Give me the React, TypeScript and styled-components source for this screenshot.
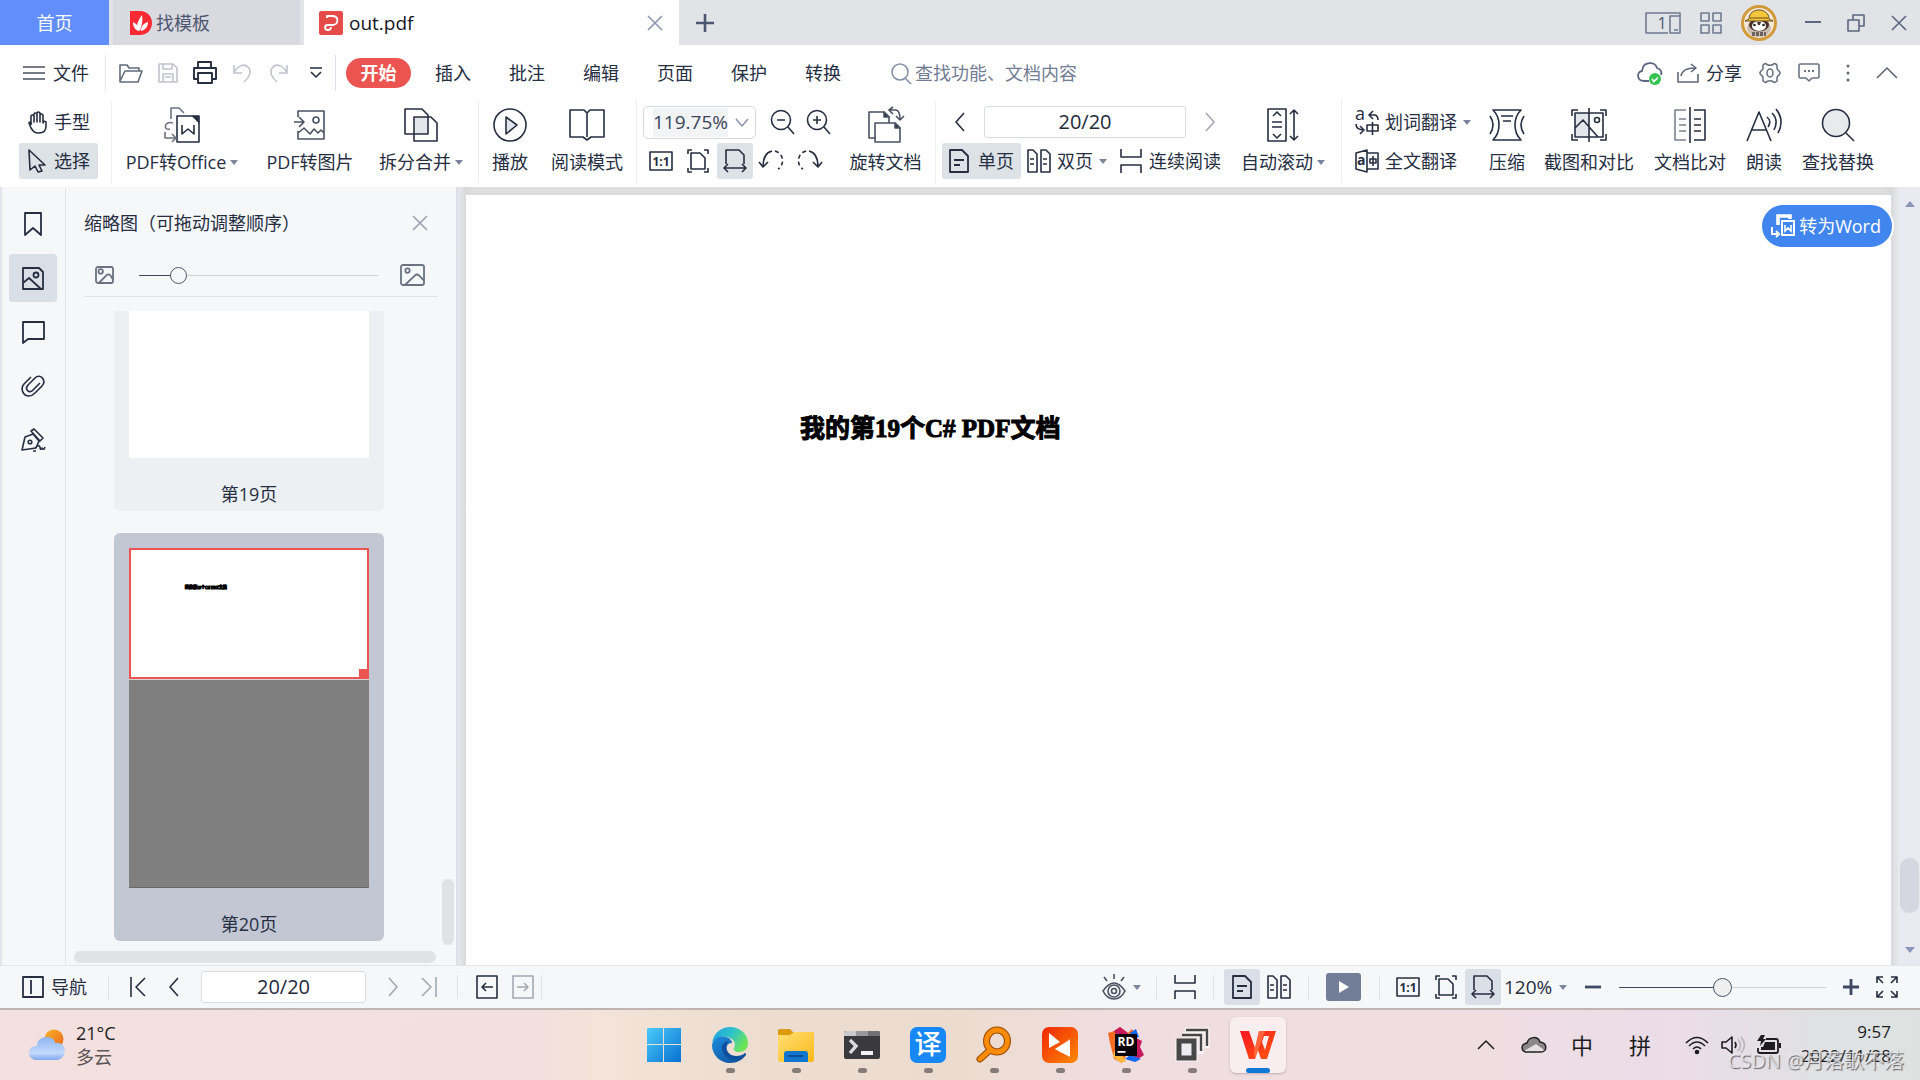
import React, { useState } from 'react';
import styled, { createGlobalStyle, css } from 'styled-components';

const ink = '#262e42';
const soft = '#6f7a92';
const hover = '#dde2e6';
const line = '#e3e5ea';

const GlobalStyle = createGlobalStyle`
  * { box-sizing: border-box; }
  html, body { margin: 0; padding: 0; }
  body, button, input, select {
    font-family: "Open Sans", "Noto Sans CJK SC", sans-serif;
    font-size: 18px;
    line-height: 24px;
    color: ${ink};
  }
  button { border: 0; padding: 0; background: none; white-space: nowrap; cursor: pointer; }
  svg { display: block; flex: none; overflow: visible; }
`;

/* ---------- icon helper ---------- */

type IcoProps = { w: number; h: number; c?: string; s?: number; children: React.ReactNode };
const Ico = ({ w, h, c = ink, s = 1.6, children }: IcoProps) => (
  <svg width={w} height={h} viewBox={`0 0 ${w} ${h}`} fill="none" stroke={c} strokeWidth={s} strokeLinejoin="round" aria-hidden="true">
    {children}
  </svg>
);

const Caret = () => (
  <svg width="8" height="5" viewBox="0 0 8 5" aria-hidden="true"><path d="M0 0h8L4 5z" fill="#7b849c" /></svg>
);
const Chevron = ({ dir, c }: { dir: 'left' | 'right' | 'up' | 'down'; c?: string }) => {
  const d = { left: 'M10 2 2 11l8 9', right: 'M2 2l8 9-8 9', up: 'M1 11 11 1l10 10', down: 'M1 1l6 7 6-7' }[dir];
  const size = { left: [12, 22], right: [12, 22], up: [22, 12], down: [14, 9] }[dir];
  return <Ico w={size[0]} h={size[1]} c={c}><path d={d} /></Ico>;
};
const CloseIcon = ({ c = '#5b6681', size = 16 }: { c?: string; size?: number }) => (
  <Ico w={size} h={size} c={c} s={1.6}><path d={`M1 1 ${size - 1} ${size - 1}M${size - 1} 1 1 ${size - 1}`} /></Ico>
);
const OneToOne = () => (
  <Ico w={24} h={20}><rect x="1" y="1" width="22" height="18" />
    <text x="12" y="15" fontSize="12" fontWeight="700" textAnchor="middle" fill={ink} stroke="none">1:1</text></Ico>
);
const FitPage = () => (
  <Ico w={22} h={24}><path d="M1 5V1h4M17 1h4v4M1 19v4h4M17 23h4v-4M4 4h9l5 5v11H4z" /></Ico>
);
const FitWidth = () => (
  <Ico w={24} h={24}><path d="M3 15V1h13l5 5v9M1 19h22M5 15l-4 4 4 4M19 15l4 4-4 4" /></Ico>
);
const SinglePage = () => (
  <Ico w={20} h={24} s={1.8}><path d="M1 1h12l6 6v16H1zM5 11h10M5 16h6" /></Ico>
);
const DoublePage = () => (
  <Ico w={24} h={24}><path d="M1 1h5l4 4v18H1zM14 1h5l4 4v18h-9zM3 10h4M3 15h4M16 10h4M16 15h4" /></Ico>
);
const Continuous = () => (
  <Ico w={22} h={24}><path d="M1 0v8h20V0M1 24v-8h20v8" /></Ico>
);
const Landscape = ({ w, h }: { w: number; h: number }) => (
  <Ico w={w} h={h} c="#6b7383" s={1.8}><rect x="1" y="1" width={w - 2} height={h - 2} rx="2" /><circle cx={w * 0.3} cy={h * 0.3} r="2.2" />
    <path d={`M${w * 0.2} ${h - 1} ${w * 0.6} ${h * 0.52}q2-2 4 0L${w - 1} ${h * 0.75}`} /></Ico>
);

/* ---------- shared controls ---------- */

const Cell = styled.button<{ $w?: number; $on?: string }>`
  display: flex; align-items: center; justify-content: center; flex: none;
  width: ${p => p.$w ?? 36}px; height: 36px; border-radius: 3px;
  background: ${p => p.$on ?? 'transparent'};
`;
const Rule = styled.i<{ $h: number; $l: number; $r: number }>`
  flex: none; width: 1px; height: ${p => p.$h}px; background: #dfe2e6;
  margin: 0 ${p => p.$r}px 0 ${p => p.$l}px;
`;
const PageInput = styled.input<{ $w: number; $m: number }>`
  width: ${p => p.$w}px; height: 32px; margin: 0 ${p => p.$m}px; border: 1px solid #d9dce0; border-radius: 3px; background: #fff;
  font-size: 20px; text-align: center; padding: 0 0 2px; color: #222a3c;
`;

/* ---------- title bar ---------- */

const Page = styled.div`display: flex; flex-direction: column; height: 100vh; min-height: 720px; overflow: hidden; background: #fff;`;
const TitleBar = styled.header`display: flex; height: 45px; flex: none; background: #e2e3e7;`;
const HomeTab = styled.button`width: 109px; background: #618efa; color: #fff;`;
const DocTab = styled.div<{ $active?: boolean }>`
  display: flex; align-items: center; gap: 4px;
  ${p => p.$active
    ? css`width: 375px; margin-left: 4px; padding: 0 16px 0 15px; background: #fff; gap: 6px; button { color: #14181f; }`
    : css`width: 187px; margin-left: 4px; padding-left: 16px; background: #d9dadf; button { color: #4c5670; }`}
`;
const TabName = styled.button<{ $latin?: boolean }>`flex: 1; text-align: left; height: 45px; font-size: ${p => (p.$latin ? 19 : 18)}px;`;
const NewTab = styled.button`display: flex; align-items: center; padding: 0 17px;`;
const WindowTools = styled.div`display: flex; align-items: center; margin-left: auto;`;

/* ---------- menu row ---------- */

const MenuRow = styled.nav`display: flex; align-items: center; height: 56px; flex: none; padding: 0 14px 0 23px;`;
const FileButton = styled.button`display: flex; align-items: center; gap: 8px;`;
const Pill = styled.button`width: 65px; height: 30px; border-radius: 15px; background: #eb5450; color: #fff; font-weight: 700; margin: 0 5px 0 10px;`;
const MenuTab = styled.button`width: 74px; height: 36px;`;
const Search = styled.label`
  display: flex; align-items: center; gap: 3px; margin-left: 31px;
  input { width: 180px; border: 0; padding: 0; outline: 0; background: none; }
  input::placeholder { color: #717c94; opacity: 1; }
`;
const MenuRight = styled.div`display: flex; align-items: center; margin-left: auto;`;
const Share = styled.button`display: flex; align-items: center; gap: 7px; margin: 0 8px 0 14px;`;

/* ---------- ribbon ---------- */

const Ribbon = styled.div`display: flex; height: 86px; flex: none;`;
const Group = styled.div<{ $l?: number; $r?: number; $last?: boolean }>`
  display: flex; height: 82px; flex: none; padding: 0 ${p => p.$r ?? 0}px 0 ${p => p.$l ?? 0}px;
  border-right: ${p => (p.$last ? '0' : '1px solid #eceef0')};
`;
const Stack = styled.div`display: flex; flex-direction: column; gap: 3px; padding-top: 3px;`;
const Row = styled.div<{ $gap?: number }>`display: flex; align-items: center; height: 36px; gap: ${p => p.$gap ?? 0}px;`;
const Small = styled.button<{ $gap: number; $pad: number; $on?: boolean }>`
  display: flex; align-items: center; height: 36px; border-radius: 3px;
  gap: ${p => p.$gap}px; padding: 0 ${p => p.$pad}px; background: ${p => (p.$on ? hover : 'transparent')};
`;
const BigButton = styled.button<{ $w: number }>`
  display: flex; flex-direction: column; align-items: center; gap: 7px; padding-top: 6px; width: ${p => p.$w}px;
  span { display: flex; align-items: center; gap: 4px; }
`;
const IconBox = styled.div`display: flex; align-items: center; justify-content: center; height: 36px;`;
const Combo = styled.div`
  display: flex; align-items: center; width: 113px; height: 33px; margin-right: 8px; padding: 0 6px 0 9px;
  border: 1px solid #d5d8dd; border-radius: 5px;
  input { width: 75px; height: 29px; border: 0; padding: 0; background: #f1f3f5; font-size: 19px; color: #3c4559; }
  button { flex: 1; display: flex; justify-content: flex-end; }
`;

type BigProps = { w: number; label: string; caret?: boolean; children: React.ReactNode };
const Big = ({ w, label, caret, children }: BigProps) => (
  <BigButton $w={w}><IconBox>{children}</IconBox><span>{label}{caret && <Caret />}</span></BigButton>
);

/* ---------- workspace ---------- */

const Work = styled.main`display: flex; flex: 1; min-height: 0;`;
const Rail = styled.aside`
  display: flex; flex-direction: column; gap: 6px; width: 66px; flex: none; padding: 13px 0 0 7px;
  background: #f6f7f9; border-left: 2px solid ${line}; border-right: 1px solid ${line};
`;
const RailButton = styled.button<{ $on?: boolean }>`
  display: flex; align-items: center; justify-content: center; width: 48px; height: 48px; border-radius: 3px;
  background: ${p => (p.$on ? '#dadee6' : 'transparent')};
`;
const Panel = styled.section`
  display: flex; flex-direction: column; width: 392px; flex: none; background: #f6f7f9; border-right: 2px solid #dfe1e7;
`;
const PanelHead = styled.div`display: flex; justify-content: space-between; align-items: center; padding: 24px 28px 19px 18px;`;
const SizeRow = styled.div`
  display: flex; align-items: center; height: 43px; margin: 0 18px; padding: 0 13px 0 11px; border-bottom: 1px solid #e1e3e8; flex: none;
`;
const Range = styled.input<{ $w: number; $thumb: string; $size: number; $fill: number; $l: number; $r: number }>`
  appearance: none; width: ${p => p.$w}px; height: 24px; margin: 0 ${p => p.$r}px 0 ${p => p.$l}px; background: transparent;
  &::-webkit-slider-runnable-track {
    height: 1px;
    background: linear-gradient(to right, #3b455b ${p => p.$fill}%, #cfd3d9 ${p => p.$fill}%);
  }
  &::-webkit-slider-thumb {
    appearance: none; width: ${p => p.$size}px; height: ${p => p.$size}px; margin-top: ${p => -Math.floor(p.$size / 2)}px;
    border: 1px solid #4b556b; border-radius: 50%; background: ${p => p.$thumb};
  }
`;
const ThumbArea = styled.div`display: flex; flex: 1; min-height: 0; margin-top: 14px;`;
const ThumbList = styled.div`display: flex; flex-direction: column; align-items: center; gap: 22px; flex: 1; padding: 0 10px 0 0; overflow: hidden;`;
const Card = styled.figure<{ $on?: boolean }>`
  margin: 0; width: 270px; flex: none; padding: ${p => (p.$on ? '15px' : '0')} 15px 0;
  border-radius: ${p => (p.$on ? '6px' : '0 0 6px 6px')}; background: ${p => (p.$on ? '#c3c7d3' : '#ecf0f3')};
  figcaption { padding: 24px 0 5px; text-align: center; }
`;
const BlankPage = styled.div`height: 147px; background: #fff;`;
const CurrentView = styled.div`
  position: relative; height: 131px; padding: 34px 0 0 54px; background: #fff; border: 2px solid #eb5450;
  font: 700 4px/8px "Liberation Serif", "Noto Sans CJK SC", serif; color: #000; -webkit-text-stroke: 1px #000;
  &::after { content: ''; position: absolute; right: 0; bottom: 0; width: 8px; height: 8px; background: #eb5450; }
`;
const GreyView = styled.div`height: 209px; background: #7f7f7f; border-top: 1px solid #d6d6d8; border-bottom: 1px solid #666;`;
const VScroll = styled.div`display: flex; flex-direction: column; justify-content: flex-end; width: 14px; padding-right: 2px;`;
const VThumb = styled.div`height: 66px; border-radius: 6px; background: #dfe3e6;`;
const HThumb = styled.div`height: 12px; flex: none; margin: 6px 20px 2px 8px; border-radius: 6px; background: #dfe3e6;`;

const Viewer = styled.section`
  position: relative; flex: 1; min-width: 0; padding: 8px 8px 0;
  background: linear-gradient(to right, #e8e9ed 0, #d8d9db 8px, #dddee0 16px, #dddee0 calc(100% - 16px), #d8d9db calc(100% - 8px), #e8e9ed 100%);
`;
const Sheet = styled.article`
  height: 100%; padding: 218px 0 0 334px; background: #fff;
  h1 { margin: 0; font: 700 25px/32px "Liberation Serif", "Noto Sans CJK SC", serif; color: #000; -webkit-text-stroke: 1px #000; }
`;
const ToWord = styled.button`
  position: absolute; top: 16px; right: 5px; display: flex; align-items: center; gap: 4px;
  height: 46px; padding: 0 11px 0 9px; border-radius: 23px; border: 2px solid #fff; background: #4186ee; color: #fff;
`;
const DocScroll = styled.div`
  display: flex; flex-direction: column; align-items: center; width: 21px; flex: none; padding: 14px 0 12px; background: #e8eaef;
`;
const DocThumb = styled.div`width: 19px; height: 55px; margin: auto 0 34px; border-radius: 9px; background: #d4d7df;`;

/* ---------- status bar ---------- */

const Status = styled.footer`
  display: flex; align-items: center; height: 43px; flex: none; padding: 0 15px 0 22px;
  background: #f6f7f9; border-top: 1px solid ${line};
`;
const NavToggle = styled.button`display: flex; align-items: center; gap: 7px;`;
const StatusRight = styled.div`display: flex; align-items: center; margin-left: auto;`;
const EyeButton = styled.button`display: flex; align-items: center; gap: 7px;`;
const Play = styled.button`display: flex; align-items: center; justify-content: center; width: 35px; height: 28px; border-radius: 3px; background: #727e97;`;
const ZoomPick = styled.label`
  display: flex; align-items: center; width: 71px; margin-left: 3px;
  select { appearance: none; border: 0; padding: 0; background: none; width: 55px; font-size: 19px; }
`;

/* ---------- desktop taskbar ---------- */

const Taskbar = styled.div`
  position: relative; display: grid; grid-template-columns: 1fr auto 1fr; align-items: center; height: 72px; flex: none;
  border-top: 2px solid #c0b4b3; color: #1d1d1f;
  background: linear-gradient(to right, #f4e0de 0, #f3dfde 28%, #f3e3d8 31%, #ecddd0 40%, #ecdccf 50%, #f0dde0 58%, #f0dde1 76%, #eadde9 88%, #dfe1e2 95%, #dde2e0 100%);
`;
const Weather = styled.button`
  display: flex; align-items: center; gap: 11px; padding-left: 29px; text-align: left; color: #1d1d1f;
  span { display: block; font-size: 18px; } span + span { color: #5c5657; }
`;
const Apps = styled.div`display: flex; padding-left: 2px;`;
const AppButton = styled.button<{ $on?: boolean }>`
  display: flex; flex-direction: column; align-items: center; justify-content: flex-end; gap: 5px;
  width: 56px; height: 56px; margin: 0 5px; border-radius: 6px;
  ${p => p.$on && css`background: #f8eef0; box-shadow: 0 1px 2px rgba(90, 60, 70, .3);`}
`;
const AppIcon = styled.div`display: flex; align-items: center; justify-content: center; height: 36px;`;
const Mark = styled.i<{ $w: number; $c: string }>`width: ${p => p.$w}px; height: 5px; border-radius: 3px; background: ${p => p.$c};`;
const TranslateTile = styled.div`
  width: 36px; height: 36px; border-radius: 7px; background: #1788f5; color: #fff; font-size: 27px; line-height: 34px; font-weight: 500;
`;
const Tray = styled.div`display: flex; align-items: center; justify-content: flex-end; padding-right: 29px;`;
const TrayCell = styled.button<{ $w: number }>`
  display: flex; align-items: center; justify-content: center; width: ${p => p.$w}px; height: 48px; font-size: 22px; color: #1d1d1f;
`;
const Clock = styled.time`width: 99px; padding-bottom: 2px; text-align: right; font-size: 17px;`;
const Watermark = styled.div`
  position: absolute; right: 16px; bottom: 5px; font-size: 20px; line-height: 28px; white-space: nowrap; pointer-events: none;
  color: rgba(240, 240, 242, .75); text-shadow: 1px 1px 1px rgba(60, 60, 70, .75);
`;

const taskApps = [
  { name: '开始', dot: false, icon: (
    <svg width="36" height="36"><defs><linearGradient id="win" x1="0" y1="0" x2="1" y2="1"><stop offset="0" stopColor="#4ccbfb" /><stop offset="1" stopColor="#0670cf" /></linearGradient></defs>
      <path fill="url(#win)" d="M2 1h15v16H1V2zM18 1h17v16H18zM1 18h16v17H1zM18 18h17v17H18z" /></svg>) },
  { name: 'Edge', dot: true, icon: (
    <svg width="36" height="36"><defs><linearGradient id="edg" x1="0" y1="0" x2="1" y2=".5"><stop offset="0" stopColor="#1b9de2" /><stop offset=".55" stopColor="#30c3c9" /><stop offset="1" stopColor="#6be45a" /></linearGradient>
      <linearGradient id="edb" x1="0" y1="0" x2="1" y2="1"><stop offset="0" stopColor="#1c8de0" /><stop offset="1" stopColor="#0c4a93" /></linearGradient></defs>
      <path fill="url(#edg)" d="M0 16C2 5 10 0 18 0c10 0 18 7 18 16 0 6-4 9-9 9-4 0-6-2-5-4 2-3 1-8-4-10-7-3-15 0-18 5z" />
      <path fill="url(#edb)" d="M0 18C1 11 8 8 14 10c4 1 6 4 6 6-6-1-8 9-1 12 5 3 11 2 15-1-3 6-9 9-16 9C8 36 0 28 0 18z" />
      <path fill="#0d4f9c" d="M10 21c0-4 3-7 7-7-4 3-4 10 2 14 5 2 11 1 14-2 1 0 1 1 1 2-3 4-9 6-14 4-6-1-10-6-10-11z" /></svg>) },
  { name: '文件资源管理器', dot: true, icon: (
    <svg width="36" height="36"><path fill="#dc9a0c" d="M0 4q0-2 2-2h10l4 4-4 4H0z" /><defs><linearGradient id="fol" x1="0" y1="0" x2="1" y2="1"><stop offset="0" stopColor="#ffdf72" /><stop offset="1" stopColor="#fbb91c" /></linearGradient></defs>
      <path fill="url(#fol)" d="M0 8h12l4-3h20v28q0 2-2 2H2q-2 0-2-2z" /><path fill="#1276cf" d="M6 35V27q0-3 3-3h18q3 0 3 3v8z" /><path fill="#0b4f96" d="M10 28h15v2H10z" /></svg>) },
  { name: '终端', dot: true, icon: (
    <svg width="36" height="36"><rect y="4" width="36" height="28" rx="2" fill="#3a3a3c" /><path fill="#c9cacc" d="M2 4h10v5H0V6q0-2 2-2z" /><path fill="#98999c" d="M12 4h12v5H12z" /><path fill="#717275" d="M24 4h10q2 0 2 2v3H24z" />
      <path d="M6 13l6 6-6 7" fill="none" stroke="#dcdcdc" strokeWidth="3.4" /><rect x="17" y="24" width="12" height="4" fill="#f2f2f2" /></svg>) },
  { name: '翻译', dot: true, icon: <TranslateTile>译</TranslateTile> },
  { name: '搜索', dot: true, icon: (
    <svg width="36" height="36" fill="none" strokeLinecap="round"><g stroke="#9a4b06" strokeWidth="7"><ellipse cx="21" cy="14" rx="10.5" ry="11" /><path d="M13 24 4 32" /></g>
      <g stroke="#fb8b08" strokeWidth="4.8"><ellipse cx="21" cy="14" rx="10.5" ry="11" /><path d="M13 24 4 32" /></g></svg>) },
  { name: '视频', dot: true, icon: (
    <svg width="36" height="36"><defs><linearGradient id="vid" x1="0" y1="0" x2="1" y2="1"><stop offset="0" stopColor="#ee2508" /><stop offset="1" stopColor="#ff8a00" /></linearGradient></defs>
      <rect width="36" height="36" rx="7" fill="url(#vid)" /><path fill="#ffb9a0" d="M13 22 28 12v9l-8 5z" /><path fill="#fff" d="M7 6 18 15 7 21zM28 13v17L13 22z" /></svg>) },
  { name: 'Rider', dot: true, icon: (
    <svg width="36" height="36"><path fill="#f66b24" d="M0 6l6-2 6-4 8 6 4-4 4 6-6 14-8 14-8-4L2 16z" /><path fill="#c5195b" d="M6 4l6-4 8 6-6 12zM26 10l8 4-2 6 4 8-6 4-8-4z" /><path fill="#1268f0" d="M22 6l6-4 3 8-6 2zM22 28l6 2 5 2-6 3-10-3z" /><path fill="#ffb53d" d="M6 24l8 4 4 6-5 2-8-6z" />
      <rect x="7" y="7" width="22" height="22" fill="#0a0508" /><text x="18" y="19" fontSize="12" fontWeight="700" textAnchor="middle" fill="#fff">RD</text><path fill="#fff" d="M9.5 24h8v1.8h-8z" /></svg>) },
  { name: '层叠', dot: true, icon: (
    <svg width="36" height="36" fill="none"><g stroke="#fbf6f5" strokeWidth="5"><path d="M11 3h22v18M8 8h19v19" /><rect x="4" y="14" width="17" height="18" /></g>
      <g stroke="#474747" strokeWidth="2.4"><path d="M12 3h21v16M8 8h19v16" /></g><rect x="5" y="14" width="15" height="17" fill="#ededef" stroke="#474747" strokeWidth="5" /></svg>) },
];

export default function App() {
  const [thumbSize, setThumbSize] = useState(14);
  const [zoom, setZoom] = useState(50);
  const [page, setPage] = useState('20/20');

  return (
    <Page lang="zh-CN">
      <GlobalStyle />
      <TitleBar>
        <HomeTab>首页</HomeTab>
        <DocTab>
          <svg width="23" height="24" viewBox="0 0 23 24"><path d="M1 0h10c7 0 12 5 12 12s-5 12-12 12H1z" fill="#fb2a33" /><path fill="#fff" d="M11 20C6 17 8 11 13 4c1 5 0 10-2 16zM10 20c-4-1-6-4-6-9 4 2 6 5 6 9zM12 20c0-5 3-8 7-9 0 5-3 8-7 9z" /></svg>
          <TabName>找模板</TabName>
        </DocTab>
        <DocTab $active>
          <svg width="24" height="24" viewBox="0 0 24 24"><rect width="24" height="24" rx="2" fill="#e54c49" /><path d="M8 7V5h5c7 0 7 8 1 9H9c-4 0-4 5 0 5 2 0 3-1 3-3" fill="none" stroke="#fff" strokeWidth="1.8" /></svg>
          <TabName $latin>out.pdf</TabName>
          <button aria-label="关闭标签"><CloseIcon c="#8b96ad" /></button>
        </DocTab>
        <NewTab aria-label="新建"><Ico w={18} h={18} c="#4a5672" s={2.6}><path d="M9 0v18M0 9h18" /></Ico></NewTab>
        <WindowTools>
          <Cell $w={46} aria-label="窗口"><Ico w={36} h={22} c={soft}><path d="M23 21H1V1h34v20H25V4h10M29 18h4" /><text x="17" y="17" fontSize="16" textAnchor="middle" fill="#4a5672" stroke="none">1</text></Ico></Cell>
          <Cell $w={50} aria-label="应用"><Ico w={22} h={22} c={soft}><path d="M1 1h8v8H1zM13 1h8v8h-8zM1 13h8v8H1zM13 13h8v8h-8z" /></Ico></Cell>
          <Cell $w={46} aria-label="账号">
            <svg width="36" height="36"><circle cx="18" cy="18" r="16.5" fill="#f5ead8" stroke="#d39a3c" strokeWidth="3" />
              <path d="M6 24c0-5 4-10 12-10s12 5 12 10c-2 6-7 8-12 8s-10-2-12-8z" fill="#c9bcb3" /><ellipse cx="18" cy="20" rx="10" ry="6.5" fill="#4d3328" /><ellipse cx="18" cy="21" rx="7" ry="5" fill="#fff" />
              <path d="M16 17h4l-1 3h-2z" fill="#4d3328" /><circle cx="13.5" cy="20" r="1.3" fill="#222" /><circle cx="22.5" cy="20" r="1.3" fill="#222" /><path d="M8 14c0-12 20-12 20 0l4 2H4z" fill="#f3c63c" stroke="#6b4a1e" strokeWidth="1" /><path d="M9 13h18" stroke="#6b4a1e" /><path d="M11 29h14" stroke="#6d625e" strokeWidth="4" strokeDasharray="3 1" /></svg>
          </Cell>
          <Rule $h={30} $l={6} $r={3} />
          <Cell $w={42} aria-label="最小化"><Ico w={16} h={16} c="#5b6681" s={2}><path d="M0 7h16" /></Ico></Cell>
          <Cell $w={44} aria-label="还原"><Ico w={18} h={18} c="#5b6681"><path d="M1 6h11v11H1zM6 6V1h11v11h-5" /></Ico></Cell>
          <Cell $w={42} aria-label="关闭"><CloseIcon /></Cell>
        </WindowTools>
      </TitleBar>

      <MenuRow>
        <FileButton><Ico w={22} h={14} c="#4a4f5c"><path d="M0 1h22M0 7h22M0 13h22" /></Ico>文件</FileButton>
        <Rule $h={36} $l={16} $r={6} />
        <Cell $w={37} aria-label="打开"><Ico w={24} h={20} c="#626b7c"><path d="M1 18V2h7l2 3h10v3M1 18l5-10h17l-4 11H1z" /></Ico></Cell>
        <Cell $w={37} aria-label="保存"><Ico w={20} h={20} c="#bfc3cb"><path d="M1 1h14l4 4v14H1zM5 1v5h9V1M5 19v-8h10v8M7 14h6" /></Ico></Cell>
        <Cell $w={37} aria-label="打印"><Ico w={24} h={24} s={1.9}><path d="M5 7V1h13v6M5 18H1V7h22v11h-4M5 12h14v10H5z" /></Ico></Cell>
        <Cell $w={37} aria-label="撤销"><Ico w={18} h={20} c="#bfc3cb"><path d="M1 2v8h8M1 10C4 3 11 0 15 4s2 10-4 15" /></Ico></Cell>
        <Cell $w={37} aria-label="重做"><Ico w={18} h={20} c="#bfc3cb"><path d="M17 2v8H9M17 10C14 3 7 0 3 4s-2 10 4 15" /></Ico></Cell>
        <Cell $w={37} aria-label="更多"><Ico w={12} h={12}><path d="M0 1h12M1 5l5 5 5-5" /></Ico></Cell>
        <Rule $h={36} $l={1} $r={0} />
        <Pill>开始</Pill>
        {['插入', '批注', '编辑', '页面', '保护', '转换'].map(t => <MenuTab key={t}>{t}</MenuTab>)}
        <Search>
          <Ico w={21} h={21} c="#8791a8"><circle cx="9" cy="9" r="8" /><path d="M14 15l6 6" /></Ico>
          <input placeholder="查找功能、文档内容" aria-label="查找" />
        </Search>
        <MenuRight>
          <button aria-label="云同步"><svg width="26" height="24" viewBox="0 0 26 24" fill="none"><path d="M12 20H7C0 20-1 11 5 10 6 0 18 0 20 7c4 1 5 4 4 7" stroke="#5b6681" strokeWidth="1.8" /><circle cx="18" cy="18" r="6" fill="#36c252" /><path d="M15 18l2 2.5 4-4" stroke="#fff" strokeWidth="1.6" /></svg></button>
          <Share><Ico w={22} h={20} c="#5f6879"><path d="M1 9v10h20v-8M4 13C5 7 10 5 18 5M14 1l5 4-5 4" /></Ico>分享</Share>
          <Cell $w={39} aria-label="设置"><Ico w={22} h={22} c="#6b7383"><path d="M8 2.500q3 1.500 6 0q1.500-2 4 .5v3q0 2 2 3 2 2 0 4-2 1-2 3v3q-2.500 2.500-4 .5-3-1.500-6 0-1.500 2-4-.5v-3q0-2-2-3-2-2 0-4 2-1 2-3v-3q2.500-2.500 4-.5z" /><ellipse cx="11" cy="11" rx="3" ry="4" /></Ico></Cell>
          <Cell $w={39} aria-label="反馈"><Ico w={22} h={20} c="#6b7383"><path d="M2 1h18l1 1v12l-1 1h-6l-3 3-3-3H2l-1-1V2z" /><path d="M6 8h2M10 8h2M14 8h2" strokeWidth="2" /></Ico></Cell>
          <Cell $w={39} aria-label="菜单"><svg width="4" height="20" fill="#5f6879"><circle cx="2" cy="3" r="1.5" /><circle cx="2" cy="10" r="1.5" /><circle cx="2" cy="17" r="1.5" /></svg></Cell>
          <Cell $w={39} aria-label="收起"><Chevron dir="up" c="#5f6879" /></Cell>
        </MenuRight>
      </MenuRow>

      <Ribbon>
        <Group $l={19} $r={13}>
          <Stack>
            <Small $gap={7} $pad={8}><Ico w={20} h={23}><path d="M4 14V5q1-2 3 0v6V3q1-2 3 0v8V2q1-2 3 0v9V4q1-2 3 0v8q1-3 3-1v4c0 5-3 7-7 7-5 0-6-2-8-5L2 12q0-2 3 1" /></Ico>手型</Small>
            <Small $gap={7} $pad={8} $on><Ico w={20} h={24}><path d="M2 1l16 15h-6l3 6-4 1-3-6-5 4z" /></Ico>选择</Small>
          </Stack>
        </Group>
        <Group $r={4}>
          <Big w={140} label="PDF转Office" caret>
            <Ico w={36} h={36}><path d="M13 9h16l6 6v20H13z" /><path d="M29 9h6v6z" fill={ink} /><path d="M18 18v9l6-5 6 5v-9" /><path d="M7 12V1h8l5 5M9 16C0 13-1 24 6 22M1 25v6h10M8 27l4 4-4 4" stroke="#6b7383" /></Ico>
          </Big>
          <Big w={116} label="PDF转图片">
            <Ico w={32} h={32} c="#4a5263"><path d="M4 8V2h26v28H4v-8M0 13h9M5 8l5 5-5 5M4 24l6-5 6 6 4-5 4 4 3-3 3 3" /><circle cx="22" cy="11" r="3" /></Ico>
          </Big>
          <Big w={106} label="拆分合并" caret>
            <Ico w={34} h={34}><path d="M11 9h13v17H11z" fill="#e3e6ea" stroke="none" /><path d="M1 1h17l6 6v19H1zM10 9h17l6 6v18H10z" /></Ico>
          </Big>
        </Group>
        <Group $r={3}>
          <Big w={62} label="播放"><Ico w={34} h={34}><circle cx="17" cy="17" r="16" /><path d="M13 9l11 8-11 9z" fill="#e3e6ea" /></Ico></Big>
          <Big w={92} label="阅读模式"><Ico w={36} h={32}><path d="M18 4l-3-3H1v27h13l4 3 4-3h13V1H21zM18 4v24" /></Ico></Big>
        </Group>
        <Group $l={6}>
          <Stack>
            <Row>
              <Combo><input defaultValue="119.75%" aria-label="缩放比例" /><button aria-label="选择比例"><Chevron dir="down" c="#8b96ad" /></button></Combo>
              <Cell aria-label="缩小"><Ico w={25} h={25}><circle cx="11" cy="10" r="9.5" /><path d="M18 17l6 7M7 10h8" /></Ico></Cell>
              <Cell aria-label="放大"><Ico w={25} h={25}><circle cx="11" cy="10" r="9.5" /><path d="M18 17l6 7M7 10h8M11 6v8" /></Ico></Cell>
            </Row>
            <Row $gap={1}>
              <Cell aria-label="实际大小"><OneToOne /></Cell>
              <Cell aria-label="适合页面"><FitPage /></Cell>
              <Cell aria-label="适合宽度" $on={hover}><FitWidth /></Cell>
              <Cell aria-label="向左旋转"><Ico w={26} h={22}><path d="M13 1Q4 3 4 17M0 12l4 5 5-5" /><path d="M16 1c10 3 9 15 3 18" strokeDasharray="4 3" /></Ico></Cell>
              <Cell aria-label="向右旋转"><Ico w={26} h={22}><path d="M13 1q9 2 9 16M26 12l-4 5-5-5" /><path d="M10 1C0 4 1 16 7 19" strokeDasharray="4 3" /></Ico></Cell>
            </Row>
          </Stack>
          <Big w={99} label="旋转文档">
            <Ico w={36} h={36} c="#4a5263"><path d="M8 31H1V5h15l5 5v6M7 16h20l5 5v14H7zM22 3h6q4 1 4 9M25 0l-4 3 4 4M28 9l4 4 4-4" /><path d="M16 5l5 5h-5zM27 16l5 5h-5z" fill={ink} /></Ico>
          </Big>
        </Group>
        <Group $l={6} $r={3}>
          <Stack>
            <Row>
              <Cell aria-label="上一页"><Chevron dir="left" /></Cell>
              <PageInput $w={202} $m={6} value={page} onChange={e => setPage(e.target.value)} aria-label="页码" />
              <Cell aria-label="下一页"><Chevron dir="right" c="#a3a8b3" /></Cell>
            </Row>
            <Row>
              <Small $gap={9} $pad={7} $on><SinglePage />单页</Small>
              <Small $gap={6} $pad={6}><DoublePage />双页<Caret /></Small>
              <Small $gap={7} $pad={7}><Continuous />连续阅读</Small>
            </Row>
          </Stack>
          <Big w={110} label="自动滚动" caret>
            <Ico w={32} h={34}><path d="M1 1h18v32H1zM6 8l4-4 4 4M6 26l4 4 4-4M5 14h10M5 19h10M27 2v30M23 6l4-4 4 4M23 28l4 4 4-4" /></Ico>
          </Big>
        </Group>
        <Group $l={13} $last>
          <Stack>
            <Small $gap={6} $pad={0}>
              <Ico w={24} h={26}><text x="0" y="11" fontSize="18" fill={ink} stroke="none">a</text><path d="M14 6h6q3 1 3 5M18 2l-4 4 4 4M1 15q0 6 8 6M5 17l4 4-4 4M12 16h11v6H12zM17.500 13v13" /></Ico>划词翻译<Caret />
            </Small>
            <Small $gap={6} $pad={0}>
              <Ico w={24} h={24}><path d="M12 4h11v16H12M1 4l11-3v22L1 20zM15 10h6v4h-6zM18 7v10" /><text x="2" y="16" fontSize="14" fontWeight="700" fill={ink} stroke="none">a</text></Ico>全文翻译
            </Small>
          </Stack>
          <Big w={72} label="压缩"><Ico w={36} h={32}><path d="M4 1h28c-8 8-8 22 0 30H4c8-8 8-22 0-30zM12 7h12M14 12h8M1 7q6 9 0 18M35 7q-6 9 0 18" /></Ico></Big>
          <Big w={92} label="截图和对比">
            <Ico w={36} h={34}><path d="M4 5h14v24H4z" fill="#e3e6ea" stroke="none" /><path d="M1 8V2h6M29 2h6v6M1 26v6h6M29 32h6v-6M4 5h28v24H4zM18 0v34M4 20l8-8 15 17" /><circle cx="26" cy="12" r="2.5" /></Ico>
          </Big>
          <Big w={110} label="文档比对">
            <Ico w={32} h={36}><path d="M12 3H1v30h11M5 12h7M5 18h7M5 24h7" stroke="#7b8291" /><path d="M20 3h11v30H20M20 12h7M20 18h7M20 24h7M16 0v36" /></Ico>
          </Big>
          <Big w={38} label="朗读"><Ico w={36} h={36}><path d="M1 34 13 5l12 29M5 23h16M21 10q5 4 1 10M26 6q7 7 2 17M30 2q9 11 2 24" /></Ico></Big>
          <Big w={110} label="查找替换"><Ico w={34} h={34}><circle cx="15" cy="15" r="13.5" fill="#e8eaec" /><path d="M25 25l8 8" /></Ico></Big>
        </Group>
      </Ribbon>

      <Work>
        <Rail>
          <RailButton aria-label="书签"><Ico w={18} h={24} s={1.8}><path d="M1 1h16v22l-8-7-8 7z" /></Ico></RailButton>
          <RailButton aria-label="缩略图" $on><Ico w={22} h={23} s={1.8}><path d="M1 1h16l4 4v17H1zM1 16l6-5 12 11" /><circle cx="14" cy="8" r="2.5" /></Ico></RailButton>
          <RailButton aria-label="批注"><Ico w={23} h={23} s={1.8}><path d="M1 1h21v17H6l-5 4z" /></Ico></RailButton>
          <RailButton aria-label="附件"><Ico w={24} h={22}><path d="M10 2 3 9C-1 14 2 21 8 21c3 0 4-1 6-3l7-7c5-6-2-13-7-8l-7 7c-4 5 2 9 5 5l7-7" /></Ico></RailButton>
          <RailButton aria-label="签名"><Ico w={24} h={24}><path d="M1 22 4 9l8-3 6 7-3 7zM10 3l3-2 9 9-3 3zM14 20q4-4 5-1 0 4 2 1 2 3 3-1M12 23h3" /><circle cx="9" cy="14" r="1.8" /></Ico></RailButton>
        </Rail>
        <Panel>
          <PanelHead><span>缩略图（可拖动调整顺序）</span><button aria-label="关闭面板"><CloseIcon c="#9aa1b0" /></button></PanelHead>
          <SizeRow>
            <Landscape w={19} h={18} />
            <Range type="range" $w={240} $size={17} $thumb="#f6f7f9" $fill={thumbSize} $l={25} $r={22} value={thumbSize}
              onChange={e => setThumbSize(+e.target.value)} aria-label="缩略图大小" />
            <Landscape w={25} h={22} />
          </SizeRow>
          <ThumbArea>
            <ThumbList>
              <Card><BlankPage /><figcaption>第19页</figcaption></Card>
              <Card $on>
                <CurrentView>我的第19个C# PDF文档</CurrentView>
                <GreyView />
                <figcaption>第20页</figcaption>
              </Card>
            </ThumbList>
            <VScroll><VThumb /></VScroll>
          </ThumbArea>
          <HThumb />
        </Panel>
        <Viewer>
          <Sheet><h1>我的第19个C# PDF文档</h1></Sheet>
          <ToWord>
            <svg width="24" height="24" viewBox="0 0 24 24" fill="none" stroke="#fff" strokeWidth="2"><path d="M7 11V2h12v3" strokeWidth="3.6" /><path d="M11 7h12v14H11z" /><path d="M14 11v6l3-3 3 3v-6" strokeWidth="1.6" /><path d="M1 13v7h7M5 17l3 3-3 3" /></svg>
            转为Word
          </ToWord>
        </Viewer>
        <DocScroll>
          <svg width="10" height="6"><path d="M0 6 5 0l5 6z" fill="#8b96ba" /></svg>
          <DocThumb />
          <svg width="10" height="6"><path d="M0 0h10L5 6z" fill="#8b96ba" /></svg>
        </DocScroll>
      </Work>

      <Status>
        <NavToggle><Ico w={22} h={22} s={1.8}><path d="M1 1h20v20H1zM9 4v14" /></Ico>导航</NavToggle>
        <Rule $h={24} $l={21} $r={11} />
        <Cell aria-label="首页"><Ico w={16} h={22}><path d="M1 1v20M15 2 6 11l9 9" /></Ico></Cell>
        <Cell aria-label="上一页"><Chevron dir="left" /></Cell>
        <PageInput $w={165} $m={9} value={page} onChange={e => setPage(e.target.value)} aria-label="当前页" />
        <Cell aria-label="下一页"><Chevron dir="right" c="#a3a8b3" /></Cell>
        <Cell aria-label="末页"><Ico w={16} h={22} c="#a3a8b3"><path d="M15 1v20M1 2l9 9-9 9" /></Ico></Cell>
        <Rule $h={24} $l={10} $r={11} />
        <Cell aria-label="后退"><Ico w={22} h={24}><path d="M1 1h20v22H1zM6 12h11M10 8l-4 4 4 4" /></Ico></Cell>
        <Cell aria-label="前进"><Ico w={22} h={24} c="#a3a8b3"><path d="M1 1h20v22H1zM5 12h11M12 8l4 4-4 4" /></Ico></Cell>
        <Rule $h={24} $l={0} $r={0} />
        <StatusRight>
          <EyeButton aria-label="护眼模式"><Ico w={24} h={26} c="#4a5263"><path d="M1 17q11-16 22 0-4 8-11 8T1 17zM12 5V0M5 7 2 3M19 7l3-4" /><circle cx="12" cy="17" r="6" /><circle cx="12" cy="17" r="2.5" /></Ico><Caret /></EyeButton>
          <Rule $h={24} $l={15} $r={10} />
          <Cell aria-label="连续阅读"><Continuous /></Cell>
          <Rule $h={24} $l={10} $r={10} />
          <Cell aria-label="单页" $on="#dadee6"><SinglePage /></Cell>
          <Cell $w={38} aria-label="双页"><DoublePage /></Cell>
          <Rule $h={24} $l={10} $r={17} />
          <Play aria-label="播放"><svg width="10" height="12"><path d="M0 0l10 6-10 6z" fill="#fff" /></svg></Play>
          <Rule $h={24} $l={18} $r={9} />
          <Cell $w={38} aria-label="实际大小"><OneToOne /></Cell>
          <Cell $w={38} aria-label="适合页面"><FitPage /></Cell>
          <Cell $on="#dadee6" aria-label="适合宽度"><FitWidth /></Cell>
          <ZoomPick><select aria-label="缩放" defaultValue="120%"><option>120%</option><option>100%</option></select><Caret /></ZoomPick>
          <Cell aria-label="缩小"><Ico w={16} h={16} c="#3d4963" s={2.8}><path d="M0 8h16" /></Ico></Cell>
          <Range type="range" $w={207} $size={19} $thumb="#efefef" $fill={zoom} $l={8} $r={7} value={zoom}
            onChange={e => setZoom(+e.target.value)} aria-label="缩放滑块" />
          <Cell aria-label="放大"><Ico w={16} h={16} c="#3d4963" s={2.8}><path d="M0 8h16M8 0v16" /></Ico></Cell>
          <Cell aria-label="全屏"><Ico w={22} h={22}><path d="M1 7V1h6M15 1h6v6M1 15v6h6M21 15v6h-6M1 1l6 6M21 1l-6 6M1 21l6-6M21 21l-6-6" /></Ico></Cell>
        </StatusRight>
      </Status>

      <Taskbar>
        <Weather>
          <svg width="36" height="32"><defs><linearGradient id="sun" x1="0" y1="0" x2="1" y2="1"><stop offset="0" stopColor="#f5b52a" /><stop offset="1" stopColor="#f0641c" /></linearGradient><linearGradient id="cl" x1="0" y1="0" x2="0" y2="1"><stop offset="0" stopColor="#8db4f3" /><stop offset=".7" stopColor="#c3dafb" /><stop offset="1" stopColor="#7ea8ee" /></linearGradient></defs>
            <circle cx="25" cy="10" r="9.5" fill="url(#sun)" /><path fill="url(#cl)" d="M8 31C-3 31-2 16 8 17 8 5 26 6 26 14c13-2 13 17 1 17z" /></svg>
          <div><span>21°C</span><span>多云</span></div>
        </Weather>
        <Apps>
          {taskApps.map(a => (
            <AppButton key={a.name} aria-label={a.name}><AppIcon>{a.icon}</AppIcon><Mark $w={9} $c={a.dot ? '#857c7a' : 'transparent'} /></AppButton>
          ))}
          <AppButton $on aria-label="WPS">
            <AppIcon><svg width="36" height="28"><defs><linearGradient id="wps" x1="0" y1="0" x2="1" y2="1"><stop offset="0" stopColor="#ff1420" /><stop offset="1" stopColor="#ff5a10" /></linearGradient></defs>
              <path fill="url(#wps)" fillRule="evenodd" d="M0 0h9l6 17 4-17h17l-9 28h-6l-3-9-3 9H9zM24 5l-2 6 3 8 4-14z" /><path d="M19 0h6l-7 19-3 9-1-8z" fill="#ff8a50" opacity=".6" /></svg></AppIcon>
            <Mark $w={24} $c="#0e78d6" />
          </AppButton>
        </Apps>
        <Tray>
          <TrayCell $w={48} aria-label="显示隐藏图标"><Ico w={18} h={12} c="#222"><path d="M1 10l8-8 8 8" /></Ico></TrayCell>
          <TrayCell $w={48} aria-label="OneDrive"><svg width="26" height="18"><path d="M6 16C0 16-1 8 6 7 8 0 17 0 19 6c8 1 7 10 1 10z" fill="#8b8788" /><path d="M3 15 15 8l8 6-3 2H6z" fill="#e6e1e3" /><path d="M6 16C0 16-1 8 6 7 8 0 17 0 19 6c8 1 7 10 1 10z" fill="none" stroke="#222" strokeWidth="1.5" /></svg></TrayCell>
          <TrayCell $w={48}>中</TrayCell>
          <TrayCell $w={68}>拼</TrayCell>
          <TrayCell $w={46} aria-label="网络"><Ico w={24} h={18} c="#1d1d1f"><path d="M1 7q11-11 22 0M4 10q8-8 16 0M8 13q4-4 8 0" /><circle cx="12" cy="16" r="1.5" fill="#1d1d1f" /></Ico></TrayCell>
          <TrayCell $w={26} aria-label="音量"><Ico w={24} h={18} c="#1d1d1f"><path d="M1 6h4l6-5v16l-6-5H1zM14 6q2 3 0 6" /><path d="M17 3q5 6 0 12M20 1q7 8 0 16" stroke="#b9b3ba" /></Ico></TrayCell>
          <TrayCell $w={46} aria-label="电池"><svg width="26" height="20"><path d="M10 4h10q2 0 2 2v10q0 2-2 2H4q-2 0-2-2v-3" fill="none" stroke="#1d1d1f" strokeWidth="1.8" /><path d="M9 7h10v8H5v-3h2zM23 8h2v5h-2zM5 0h4L7 4h3l-6 7 1-5H1z" fill="#1d1d1f" /></svg></TrayCell>
          <Clock>9:57<br />2022/11/28</Clock>
        </Tray>
        <Watermark>CSDN @月落歌不落</Watermark>
      </Taskbar>
    </Page>
  );
}
